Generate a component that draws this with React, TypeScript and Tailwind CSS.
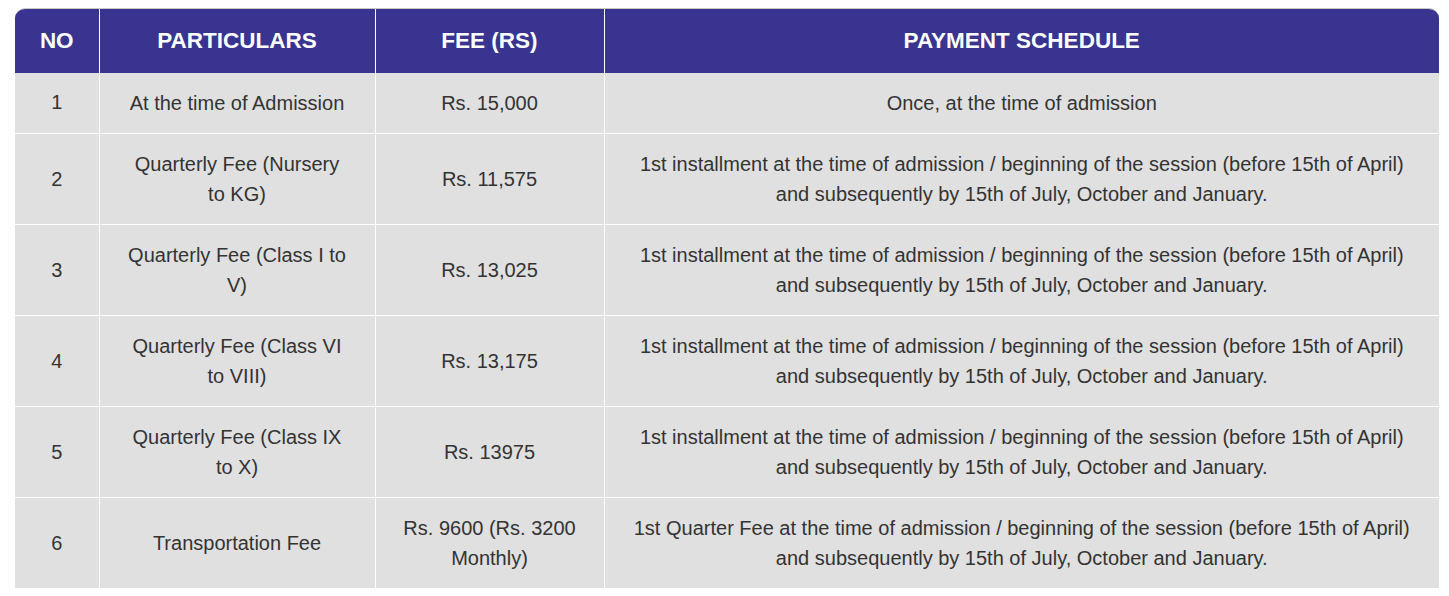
import React from "react";

type Row = {
  no: number;
  particulars: string;
  fee: string;
  schedule: string;
};

const rest = "and subsequently by 15th of July, October and January.";

const rows: Row[] = [
  { no: 1, particulars: "At the time of Admission", fee: "Rs. 15,000", schedule: "Once, at the time of admission" },
  {
    no: 2,
    particulars: "Quarterly Fee (Nursery to KG)",
    fee: "Rs. 11,575",
    schedule: "1st installment at the time of admission / beginning of the session (before 15th of April) " + rest,
  },
  {
    no: 3,
    particulars: "Quarterly Fee (Class I to V)",
    fee: "Rs. 13,025",
    schedule: "1st installment at the time of admission / beginning of the session (before 15th of April) " + rest,
  },
  {
    no: 4,
    particulars: "Quarterly Fee (Class VI to VIII)",
    fee: "Rs. 13,175",
    schedule: "1st installment at the time of admission / beginning of the session (before 15th of April) " + rest,
  },
  {
    no: 5,
    particulars: "Quarterly Fee (Class IX to X)",
    fee: "Rs. 13975",
    schedule: "1st installment at the time of admission / beginning of the session (before 15th of April) " + rest,
  },
  {
    no: 6,
    particulars: "Transportation Fee",
    fee: "Rs. 9600 (Rs. 3200 Monthly)",
    schedule: "1st Quarter Fee at the time of admission / beginning of the session (before 15th of April) " + rest,
  },
];

export default function App() {
  return (
    <div className="min-h-screen bg-white pt-2 pl-[15px]" style={{ fontFamily: '"Liberation Sans", Arial, sans-serif' }}>
      <div className="w-[1424px] overflow-hidden rounded-t-[10px] border-t border-[#c9c9c2]">
        <table className="w-full table-fixed border-collapse text-center">
          <colgroup>
            <col className="w-[84px]" />
            <col className="w-[276px]" />
            <col className="w-[229px]" />
            <col />
          </colgroup>
          <thead>
            <tr className="h-[64px] bg-[#38348f] text-[22.5px] font-bold text-white">
              <th className="border-r border-white">NO</th>
              <th className="border-r border-white">PARTICULARS</th>
              <th className="border-r border-white">FEE (RS)</th>
              <th>PAYMENT SCHEDULE</th>
            </tr>
          </thead>
          <tbody className="text-[20px] leading-[30px] text-[#333]">
            {rows.map((r, i) => (
              <tr key={r.no} className={`bg-[#e0e0e0] ${i === 0 ? "" : "border-t border-white"}`}>
                <td className={`border-r border-white px-2 ${i === 0 ? "pt-[14px] pb-[16px]" : "py-[15px]"}`}>{r.no}</td>
                <td className="border-r border-white px-[28px] py-[15px]">{r.particulars}</td>
                <td className="border-r border-white px-[20px] py-[15px]">{r.fee}</td>
                <td className="px-[20px] py-[15px]">{r.schedule}</td>
              </tr>
            ))}
          </tbody>
        </table>
      </div>
    </div>
  );
}
